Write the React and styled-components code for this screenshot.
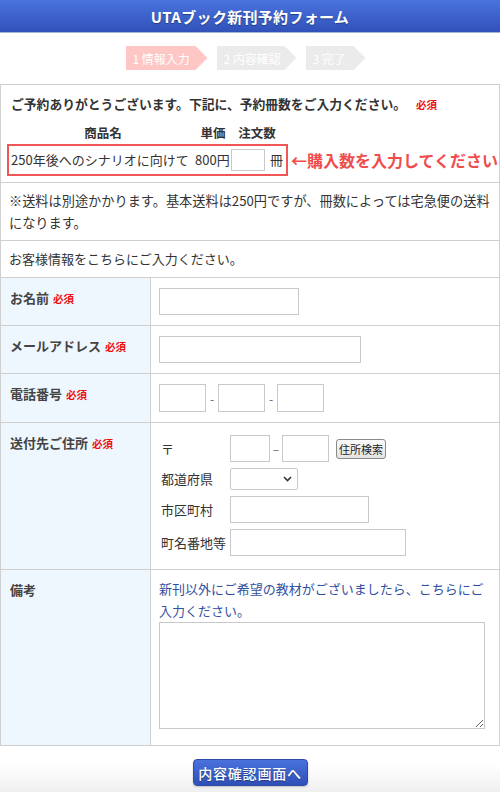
import React from "react";
import styled, { createGlobalStyle } from "styled-components";

const Global = createGlobalStyle`
  html, body { margin: 0; padding: 0; background: #fff; }
  body {
    font-family: "Noto Sans CJK JP", "Noto Sans", sans-serif;
    color: #333;
    -webkit-font-smoothing: antialiased;
  }
  * { box-sizing: border-box; }
`;

const Page = styled.div`
  width: 500px;
`;

const Header = styled.header`
  height: 33px;
  display: flex;
  align-items: center;
  justify-content: center;
  background: linear-gradient(#4a73de, #3151b9);
  border-bottom: 1px solid #9fb6d6;
  color: #fff;
  font-size: 15px;
  font-weight: 700;
  letter-spacing: 0.3px;
  text-shadow: 0 1px 1px rgba(0, 0, 0, 0.35);
`;

const Steps = styled.nav`
  display: flex;
  justify-content: center;
  gap: 9px;
  margin: 13px 0 14px;
  padding-right: 9px;
`;

const Step = styled.div`
  width: ${(p) => p.$w}px;
  height: 24px;
  display: flex;
  align-items: center;
  padding-left: 7px;
  font-size: 12px;
  color: #fff;
  background: ${(p) => (p.$active ? "#ffc6c6" : "#ebebeb")};
  clip-path: polygon(0 0, calc(100% - 12px) 0, 100% 50%, calc(100% - 12px) 100%, 0 100%);
`;

const FormBox = styled.div`
  border: 1px solid #cfcfcf;
`;

const Section = styled.section`
  padding: ${(p) => p.$pad};
  border-top: ${(p) => (p.$first ? "none" : "1px solid #cfcfcf")};
  font-size: ${(p) => p.$fs || 13}px;
  line-height: ${(p) => p.$lh || 20}px;
`;

const Intro = styled.p`
  margin: 0 0 0 4px;
  font-weight: 700;
  font-size: 12.8px;
  line-height: 20px;
  color: #333;
  white-space: nowrap;
`;

const Required = styled.span`
  color: #ee0f0f;
  font-weight: 700;
  font-size: 10.5px;
  margin-left: ${(p) => p.$ml || 4}px;
`;

const OrderGrid = styled.div`
  display: grid;
  grid-template-columns: 184px 36px 52px;
  align-items: center;
`;

const OrderHead = styled(OrderGrid)`
  margin: 8px 0 1px 4px;
  font-weight: 700;
  font-size: 12.5px;
  line-height: 20px;
  text-align: center;
`;

const OrderLine = styled.div`
  display: flex;
  align-items: center;
`;

const OrderBox = styled(OrderGrid)`
  height: 32px;
  padding: 0 3px 0 2px;
  border: 2px solid #f05656;
  font-size: 13px;
  white-space: nowrap;
`;

const Qty = styled.div`
  display: flex;
  align-items: center;
  gap: 5px;
  justify-content: flex-end;
`;

const Callout = styled.span`
  margin-left: 3px;
  color: #f04c4c;
  font-weight: 700;
  font-size: 16px;
  white-space: nowrap;
`;

const TextInput = styled.input`
  width: ${(p) => p.$w}px;
  height: ${(p) => p.$h || 27}px;
  border: 1px solid #c9c9c9;
  border-radius: 0;
  background: #fff;
  padding: 0 4px;
  margin: 0;
  font: inherit;
  display: block;
`;

const Row = styled.div`
  display: grid;
  grid-template-columns: 150px 1fr;
  border-top: 1px solid #cfcfcf;
`;

const Label = styled.div`
  background: #eff7fe;
  border-right: 1px solid #cfcfcf;
  padding: 10px 9px;
  font-size: 13px;
  font-weight: 700;
  line-height: 20px;
  color: #444;
`;

const Cell = styled.div`
  padding: ${(p) => p.$pad || "10px 8px"};
  display: flex;
  flex-direction: ${(p) => (p.$col ? "column" : "row")};
  align-items: ${(p) => (p.$col ? "flex-start" : "center")};
  align-self: start;
`;

const Dash = styled.span`
  font-size: 12px;
  color: #666;
  width: 12px;
  text-align: center;
`;

const AddressGrid = styled.div`
  display: grid;
  grid-template-columns: 71px auto;
  row-gap: 6px;
  align-items: center;
  font-size: 13px;
  line-height: 20px;
`;

const AddrLabel = styled.span`
  padding-left: 2px;
  color: #333;
  white-space: nowrap;
`;

const Inline = styled.div`
  display: flex;
  align-items: center;
`;

const SearchButton = styled.button`
  margin-left: 7px;
  height: 20px;
  padding: 0 2px;
  font-family: inherit;
  font-size: 11px;
  line-height: 16px;
  color: #222;
  background: linear-gradient(#fafafa, #e4e4e4);
  border: 1px solid #8a8a8a;
  border-radius: 3px;
`;

const SelectWrap = styled.div`
  position: relative;
  width: 68px;
  height: 22px;
`;

const Select = styled.select`
  appearance: none;
  width: 100%;
  height: 100%;
  border: 1px solid #c9c9c9;
  border-radius: 2px;
  background: #fff;
  margin: 0;
  display: block;
`;

const Chevron = styled.svg`
  position: absolute;
  right: 6px;
  top: 8px;
  pointer-events: none;
`;

const Hint = styled.p`
  margin: 0;
  color: #32509f;
  font-size: 13px;
  line-height: 22px;
  width: 326px;
`;

const TextArea = styled.textarea`
  width: 326px;
  height: 107px;
  border: 1px solid #c9c9c9;
  border-radius: 0;
  display: block;
  margin: 0;
  font: inherit;
`;

const Footer = styled.div`
  display: flex;
  justify-content: center;
  padding: 13px 0 6px;
  background: linear-gradient(#fff 40%, #efefef);
`;

const SubmitButton = styled.button`
  width: 115px;
  height: 27px;
  border: 1px solid #2c4aa8;
  border-radius: 4px;
  background: linear-gradient(#4a72dd, #2e4fb7);
  color: #fff;
  font-family: inherit;
  font-size: 14px;
  font-weight: 500;
  letter-spacing: 0.8px;
  text-shadow: 0 1px 1px rgba(0, 0, 0, 0.35);
  box-shadow: 0 1px 2px rgba(0, 0, 0, 0.2);
  padding: 0;
`;

export default function App() {
  return (
    <Page>
      <Global />
      <Header>UTAブック新刊予約フォーム</Header>
      <Steps>
        <Step $active $w={82}>1 情報入力</Step>
        <Step $w={80}>2 内容確認</Step>
        <Step $w={60}>3 完了</Step>
      </Steps>

      <FormBox>
        <Section $first $pad="9px 6px 6px 6px">
          <Intro>
            ご予約ありがとうございます。下記に、予約冊数をご入力ください。
            <Required $ml={10}>必須</Required>
          </Intro>
          <OrderHead>
            <span>商品名</span>
            <span>単価</span>
            <span>注文数</span>
          </OrderHead>
          <OrderLine>
            <OrderBox>
              <span>250年後へのシナリオに向けて</span>
              <span>800円</span>
              <Qty>
                <TextInput $w={34} $h={22} />
                <span>冊</span>
              </Qty>
            </OrderBox>
            <Callout>←購入数を入力してください</Callout>
          </OrderLine>
        </Section>

        <Section $pad="7px 8px 6px" $lh={22} $fs={13.2}>
          ※送料は別途かかります。基本送料は250円ですが、冊数によっては宅急便の送料になります。
        </Section>

        <Section $pad="8px 8px 8px">お客様情報をこちらにご入力ください。</Section>

        <Row>
          <Label>
            お名前<Required>必須</Required>
          </Label>
          <Cell>
            <TextInput $w={140} />
          </Cell>
        </Row>

        <Row>
          <Label>
            メールアドレス<Required>必須</Required>
          </Label>
          <Cell>
            <TextInput $w={202} />
          </Cell>
        </Row>

        <Row>
          <Label>
            電話番号<Required>必須</Required>
          </Label>
          <Cell>
            <TextInput $w={47} $h={28} />
            <Dash>-</Dash>
            <TextInput $w={47} $h={28} />
            <Dash>-</Dash>
            <TextInput $w={47} $h={28} />
          </Cell>
        </Row>

        <Row>
          <Label>
            送付先ご住所<Required>必須</Required>
          </Label>
          <Cell $pad="12px 8px 13px">
            <AddressGrid>
              <AddrLabel>〒</AddrLabel>
              <Inline>
                <TextInput $w={40} />
                <Dash>–</Dash>
                <TextInput $w={47} />
                <SearchButton type="button">住所検索</SearchButton>
              </Inline>
              <AddrLabel>都道府県</AddrLabel>
              <SelectWrap>
                <Select defaultValue="">
                  <option value=""></option>
                </Select>
                <Chevron width="9" height="6" viewBox="0 0 9 6">
                  <path d="M1 1l3.5 3.5L8 1" fill="none" stroke="#333" strokeWidth="1.6" />
                </Chevron>
              </SelectWrap>
              <AddrLabel>市区町村</AddrLabel>
              <TextInput $w={139} />
              <AddrLabel>町名番地等</AddrLabel>
              <TextInput $w={176} />
            </AddressGrid>
          </Cell>
        </Row>

        <Row>
          <Label>備考</Label>
          <Cell $col $pad="8px 8px 16px">
            <Hint>新刊以外にご希望の教材がございましたら、こちらにご入力ください。</Hint>
            <TextArea />
          </Cell>
        </Row>
      </FormBox>

      <Footer>
        <SubmitButton type="button">内容確認画面へ</SubmitButton>
      </Footer>
    </Page>
  );
}
